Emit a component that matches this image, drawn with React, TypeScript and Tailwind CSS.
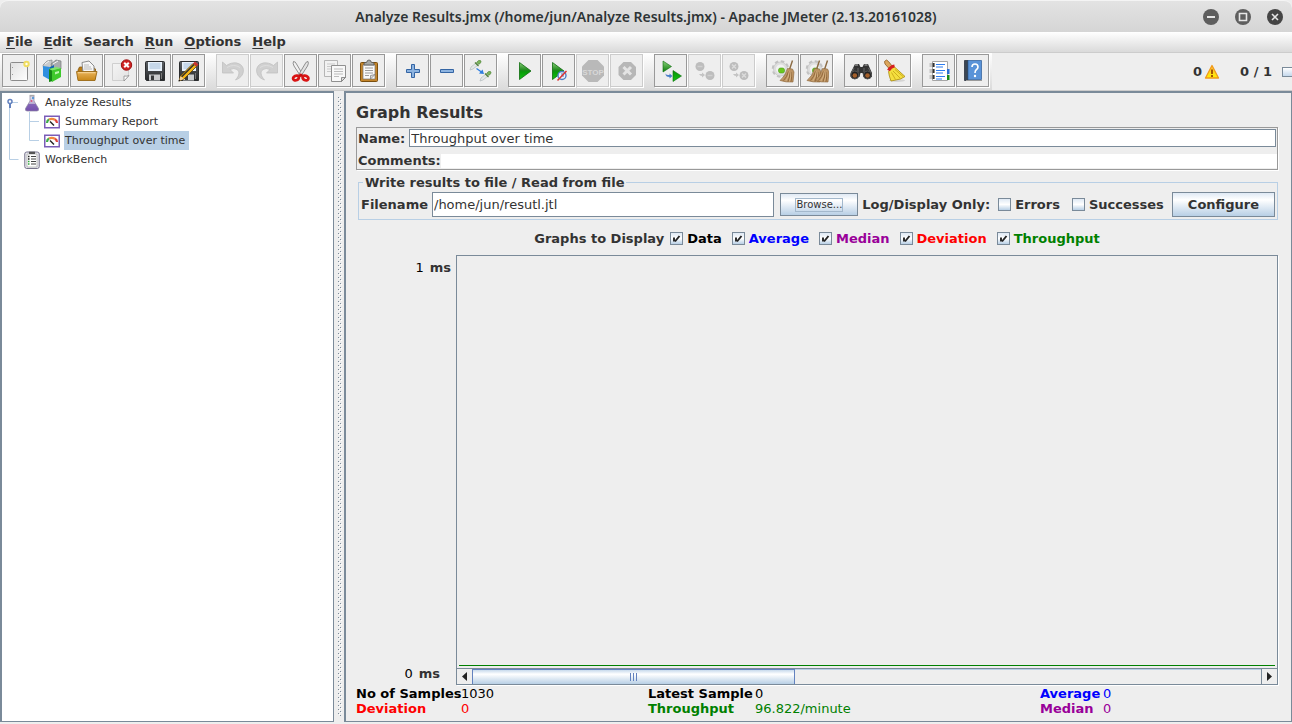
import React, { useState } from "react";

type Draw = { children: React.ReactNode };

function Ico({ children }: Draw) {
  return (
    <svg viewBox="0 0 24 24" className="size-6" fill="none" aria-hidden="true">
      {children}
    </svg>
  );
}

function Defs() {
  return (
    <svg className="absolute size-0" aria-hidden="true">
      <defs>
        <linearGradient id="green" x1="0" y1="0" x2="0" y2="1">
          <stop offset="0" stopColor="#8ad07a" />
          <stop offset="0.45" stopColor="#1f8a1c" />
          <stop offset="0.55" stopColor="#0a9a0a" />
          <stop offset="1" stopColor="#12c512" />
        </linearGradient>
        <linearGradient id="dark" x1="0" y1="0" x2="0" y2="1">
          <stop offset="0" stopColor="#5c6064" />
          <stop offset="1" stopColor="#26282a" />
        </linearGradient>
        <linearGradient id="folder" x1="0" y1="0" x2="0" y2="1">
          <stop offset="0" stopColor="#e9b35a" />
          <stop offset="1" stopColor="#c98818" />
        </linearGradient>
        <linearGradient id="paper" x1="0" y1="0" x2="1" y2="1">
          <stop offset="0" stopColor="#e0e0e0" />
          <stop offset="1" stopColor="#ffffff" />
        </linearGradient>
        <linearGradient id="sheet" x1="0" y1="0" x2="1" y2="1">
          <stop offset="0" stopColor="#f4f4f4" />
          <stop offset="1" stopColor="#e2e2e2" />
        </linearGradient>
        <linearGradient id="warn" x1="0" y1="0" x2="0" y2="1">
          <stop offset="0" stopColor="#ffb640" />
          <stop offset="1" stopColor="#fff200" />
        </linearGradient>
        <linearGradient id="flask" x1="0" y1="0" x2="0" y2="1">
          <stop offset="0" stopColor="#f2f2f4" />
          <stop offset="0.5" stopColor="#b9acd0" />
          <stop offset="0.55" stopColor="#8465b8" />
          <stop offset="1" stopColor="#7450ac" />
        </linearGradient>
      </defs>
    </svg>
  );
}

const NewIcon = () => (
  <Ico>
    <rect x="3.5" y="3.5" width="17" height="18" rx="1" fill="url(#paper)" stroke="#8b8b8b" />
    <path d="M5.5 8v1M5.5 15v1" stroke="#999" />
    <circle cx="19.5" cy="5" r="2.2" fill="#fffdf0" stroke="#f0dd60" strokeWidth="2" />
  </Ico>
);

const TemplatesIcon = () => (
  <Ico>
    <path d="M2 6l4-4 5-1v9l-8 3z" fill="#c7c9cb" stroke="#85888a" strokeWidth="0.7" />
    <path d="M10 5l5-4 5 1v8l-8 2z" fill="#a9acae" stroke="#75787a" strokeWidth="0.7" />
    <path d="M4 5l4-3M12 5l5-3" stroke="#f5f5f5" />
    <path d="M2 7l7 1v13l-7-4z" fill="#2f8fe0" />
    <path d="M9 8l4-2v15l-4 1z" fill="#1565b4" />
    <path d="M8 10l4-1v13l-4 1z" fill="#158815" />
    <path d="M11 11l9-2v9l-9 5z" fill="#3fc92c" />
    <path d="M8 10l7-2 5 1-9 2.500z" fill="#7fe56c" />
    <path d="M14 13l4-1v2l-4 1.500z" fill="#b8f5ac" />
  </Ico>
);

const OpenIcon = () => (
  <Ico>
    <path d="M3 11l1.500-3h3v4H18l1-3 1.500 1v10H4z" fill="#b97a14" stroke="#8a5d12" strokeWidth="0.8" />
    <path d="M7 3.500l7-1.500 5 5v6H8z" fill="#f7f7f7" stroke="#8c8c8c" />
    <path d="M9 6h5M9 8h7M9 10h8" stroke="#aaa" strokeWidth="0.8" />
    <path d="M1.500 12.500h20.500l-2 9h-17z" fill="url(#folder)" stroke="#9b6a16" strokeWidth="0.9" />
    <path d="M3 13.700h17.500" stroke="#f8d79a" />
  </Ico>
);

const CloseIcon = () => (
  <Ico>
    <path d="M3.5 4.500h16v13l-4 4h-12z" fill="url(#sheet)" stroke="#cfcfcf" />
    <path d="M20 16.500l-5 5.500v-5q3 .5 5-.5z" fill="#fff" stroke="#8d8d8d" strokeWidth="0.8" />
    <circle cx="17.5" cy="6" r="5.200" fill="#cf2323" stroke="#9c1212" />
    <path d="M15.200 3.700l4.600 4.600M19.800 3.700l-4.600 4.600" stroke="#fff" strokeWidth="2" />
  </Ico>
);

const Disk = () => (
  <>
    <path d="M2.500 3.500q0-1 1-1h17q1 0 1 1v18h-18l-1-1z" fill="url(#dark)" stroke="#2c2e30" />
    <path d="M5 3h14v9H5z" fill="#e8f1fa" />
    <path d="M6.500 5h11M6.500 7h11M6.500 9h11" stroke="#9db9d6" strokeWidth="0.900" />
    <path d="M6 15.500h11v6H6z" fill="#c9cbcd" />
    <path d="M8 16.500h3v4.500H8z" fill="#37393b" />
    <path d="M18.500 14v6" stroke="#777" />
  </>
);

const SaveIcon = () => <Ico><Disk /></Ico>;
const SaveAsIcon = () => (
  <Ico>
    <Disk />
    <path d="M2 22l1.500-5L16 4.500l3.500 3L7 20z" fill="#f3b414" stroke="#5b3d08" strokeWidth="0.800" />
    <path d="M4.500 18L17 5.500" stroke="#2b2b2b" strokeWidth="1.200" />
    <path d="M16 4.500L18 2.500l3.500 3-2 2z" fill="#c9332c" />
    <path d="M2 22l1.500-5 3.500 3z" fill="#f1cf96" />
    <path d="M1.500 22.500l.6-2 1.400 1.300z" fill="#111" />
  </Ico>
);

const UndoShape = () => (
  <>
    <path d="M1.500 3v11h11L9 10.500q4-2 7 0c3 2 2.500 6-1.500 10.500 6-2 9-7 7.500-12C20 3.500 12 2 5.500 6.500z" fill="#d0d0d0" stroke="#c0c0c0" strokeWidth="0.800" />
    <path d="M6 8.500q7-4 13 0" stroke="#dedede" />
  </>
);
const UndoIcon = () => <Ico><UndoShape /></Ico>;
const RedoIcon = () => <Ico><g transform="translate(24 0) scale(-1 1)"><UndoShape /></g></Ico>;

const CutIcon = () => (
  <Ico>
    <path d="M4.500 2.500q2 0 3 2.500l6.500 11-2.500 1L5 7q-1.500-3-.5-4.500z" fill="#f2f2f2" stroke="#777" strokeWidth="0.800" />
    <path d="M19 2.500q-2 0-3 2.500L9.500 16l2.500 1L18.500 7q1.500-3 .5-4.500z" fill="#e2e2e2" stroke="#777" strokeWidth="0.800" />
    <ellipse cx="7" cy="19" rx="3" ry="2.300" fill="#eee" stroke="#d91414" strokeWidth="2.800" transform="rotate(-25 7 19)" />
    <ellipse cx="16.500" cy="19" rx="3" ry="2.300" fill="#eee" stroke="#d91414" strokeWidth="2.800" transform="rotate(25 16.500 19)" />
    <circle cx="11.800" cy="16.300" r="1.800" fill="#c90d0d" />
  </Ico>
);

const CopyIcon = () => (
  <Ico>
    <path d="M1.500 1.500h13v16h-13z" fill="#f2f2f2" stroke="#b5b5b5" />
    <path d="M4 5h8M4 7.500h8M4 10h8M4 12.500h5" stroke="#c9c9c9" />
    <path d="M8.500 6.500h14v12l-4 4h-10z" fill="#f8f8f8" stroke="#909090" />
    <path d="M11 10h9M11 12.500h9M11 15h9M11 17.500h5" stroke="#bcbcbc" />
    <path d="M22.500 18.500h-4v4z" fill="#dcdcdc" stroke="#777" strokeWidth="0.800" />
  </Ico>
);

const PasteIcon = () => (
  <Ico>
    <rect x="3.5" y="3.500" width="17" height="19" rx="1" fill="#c4852a" stroke="#7a4f10" />
    <path d="M6 6h12v14H6z" fill="#fafafa" stroke="#777" strokeWidth="0.700" />
    <path d="M8 9h8M8 11.500h8M8 14h8M8 16.500h4" stroke="#9c9c9c" />
    <path d="M18 15.500L13.500 20l0-3.500z" fill="#ddd" stroke="#777" strokeWidth="0.700" />
    <path d="M7 6V4l3-1q0-2 2-2t2 2l3 1v2z" fill="#a6a8a5" stroke="#555" strokeWidth="0.800" />
  </Ico>
);

const PlusIcon = () => (
  <Ico>
    <path d="M10.500 5.500h3v5h5v3h-5v5h-3v-5h-5v-3h5z" fill="#8cb3e0" stroke="#3465a4" />
  </Ico>
);
const MinusIcon = () => (
  <Ico>
    <path d="M5.500 10.500h13v3h-13z" fill="#8cb3e0" stroke="#3465a4" />
  </Ico>
);

const Dropper = ({ at }: { at: string }) => (
  <g transform={at}>
    <path d="M0 10l1-3 5-4 2 2-5 4z" fill="#e4e8e9" stroke="#b4bcbe" strokeWidth="0.700" />
    <path d="M5 2.500l3.500 3.500" stroke="#507f3a" strokeWidth="1.200" />
    <path d="M6.500 2.500q2-3 4-2t-1.500 4z" fill="#7ab55c" stroke="#477433" strokeWidth="0.500" />
  </g>
);
const ToggleIcon = () => (
  <Ico>
    <Dropper at="translate(1 1)" />
    <Dropper at="translate(11 12)" />
    <path d="M7.500 9.500l5 3.500" stroke="#2f7ee0" strokeWidth="1.300" />
    <path d="M15 15l-5-.5 3.500-4z" fill="#2f7ee0" />
  </Ico>
);

const StartIcon = () => (
  <Ico>
    <path d="M6.500 3.500v17l11.500-8.500z" fill="url(#green)" stroke="#0c6b0c" strokeWidth="0.800" />
  </Ico>
);
const StartNoPauseIcon = () => (
  <Ico>
    <path d="M5.500 3.500v17l11.500-8.500z" fill="url(#green)" stroke="#0c6b0c" strokeWidth="0.800" />
    <circle cx="15" cy="16.500" r="4" fill="#eef3fb" stroke="#4d7fc4" strokeWidth="1.400" />
    <path d="M15 14v3h2" stroke="#4d7fc4" />
    <path d="M10.500 21.500l9-9.500" stroke="#d33" strokeWidth="1.500" />
  </Ico>
);
const StopIcon = () => (
  <Ico>
    <path d="M7.500 1h9L23 7.500v9L16.500 23h-9L1 16.500v-9z" fill="#b9b9b9" />
    <text x="12" y="15.500" textAnchor="middle" fontSize="8" fontWeight="700" fontFamily="Liberation Sans, sans-serif" fill="#d8d8d8">STOP</text>
  </Ico>
);
const ShutdownIcon = () => (
  <Ico>
    <path d="M8.500 3h7.500l5 5v8l-5 5H8.500l-5-5V8z" fill="#b7b7b7" />
    <path d="M8.500 8l7.500 7.500M16 8l-7.500 7.500" stroke="#e4e4e4" strokeWidth="3" />
  </Ico>
);
const RemoteStartIcon = () => (
  <Ico>
    <path d="M4 2v11l8.500-5.500zM14 11.500v11l8.500-5.500z" fill="url(#green)" stroke="#0c6b0c" strokeWidth="0.600" />
    <path d="M6.500 14.500q1 2 4 1.500v-1.500l3 2.500-3 2.500V18q-4 0-4-3.500z" fill="#4a7fc9" />
  </Ico>
);
const RemoteGrey = ({ mark }: { mark: "bar" | "cross" }) => (
  <Ico>
    <circle cx="7" cy="7.500" r="4.500" fill="#bdbdbd" />
    <circle cx="17" cy="16.500" r="4.500" fill="#bdbdbd" />
    <path d="M6 15h3v-1.500l3 2.500-3 2.500V17q-2 0-3-2z" fill="#c4c4c4" />
    {mark === "bar" ? (
      <path d="M4.500 7.500h5M14.500 16.500h5" stroke="#d0d0d0" strokeWidth="1.500" />
    ) : (
      <path d="M5 5.500l4 4M9 5.500l-4 4M15 14.500l4 4M19 14.500l-4 4" stroke="#dcdcdc" strokeWidth="1.300" />
    )}
  </Ico>
);

const Gear = () => (
  <>
    <circle cx="9.500" cy="10" r="7.500" stroke="#c2c2c2" strokeWidth="2.500" strokeDasharray="3.400 2.500" />
    <circle cx="9.500" cy="10" r="7" fill="#dedede" stroke="#bdbdbd" strokeWidth="0.600" />
    <circle cx="9.500" cy="10" r="4.500" fill="#f2f2f2" />
    <rect x="7.500" y="9" width="6" height="5" rx="2" fill="#6bc820" stroke="#4c9a17" strokeWidth="0.600" />
  </>
);
const Broom = ({ x }: { x: number }) => (
  <g transform={`translate(${x} 0)`}>
    <path d="M11.500 1.500l-3 9" stroke="#8a6a42" strokeWidth="1.400" />
    <path d="M6.500 9.500l5 .5 1.500 3-1 10Q5 23.500-1 21.500 4.500 17 6.500 9.500z" fill="#bd9463" stroke="#8a6338" strokeWidth="0.600" />
    <path d="M7.500 12.500Q6 18 2.500 21.500M9 13q0 5-2 9.500M10.500 13q.5 5-.5 9.500" stroke="#8c6337" strokeWidth="0.900" />
    <path d="M8.300 12.500q-.3 5-3.500 9.500M10 13q0 5-1.500 9.500" stroke="#e4c496" strokeWidth="0.600" />
  </g>
);
const ClearIcon = () => <Ico><Gear /><Broom x={10} /></Ico>;
const ClearAllIcon = () => <Ico><Gear /><Broom x={3} /><Broom x={11} /></Ico>;

const SearchIcon = () => (
  <Ico>
    <path d="M6 5h4l1.500 3h2L15 5h4l4 9v4H14.500l-1-4h-2l-1 4H1.500v-4z" fill="#343434" />
    <path d="M6 6h3M15.500 6h3" stroke="#8f8f8f" strokeWidth="1.500" />
    <path d="M5 9l-2 4M19.500 9l2 4M9 9v4M15 9v4" stroke="#666" />
    <circle cx="5.800" cy="16" r="4" fill="#222" stroke="#555" />
    <circle cx="18.500" cy="16" r="4" fill="#222" stroke="#555" />
    <circle cx="5.800" cy="16.500" r="2.300" fill="#a4602c" />
    <circle cx="18.500" cy="16.500" r="2.300" fill="#a4602c" />
  </Ico>
);
const ResetSearchIcon = () => (
  <Ico>
    <ellipse cx="14" cy="21.500" rx="8" ry="1.500" fill="#d4d4d4" />
    <path d="M1.500 2.500q2-3 4 0l4 5-3 2.500-4.500-5z" fill="#dca65c" stroke="#8b5a20" strokeWidth="0.800" />
    <path d="M11 7.500L22 17.500 17.500 20 8 22q-2-5-2.500-9.500z" fill="#f4df3f" stroke="#a98a0b" strokeWidth="0.800" />
    <path d="M10 12l7.500 7.500M8.500 13.500l4 7M12 10.500l8 7" stroke="#c9a819" strokeWidth="0.900" />
    <path d="M5.500 11.500Q7.500 7.500 11.500 7" stroke="#d62020" strokeWidth="3" />
  </Ico>
);
const FunctionIcon = () => (
  <Ico>
    <path d="M5.500 2.500h15v19h-15z" fill="#fff" stroke="#a5a5a5" />
    <path d="M20 10h2.500v5H20z" fill="#2a6fd6" />
    <path d="M20 16h2.500v5H20z" fill="#178a17" />
    <path d="M9 5.500h9M9 8h7M9 11.500h9M9 14h7M9 17.500h9M9 20h6" stroke="#2d7df0" strokeWidth="1.200" />
    <path d="M6.500 4v4M6.500 10v4M6.500 16v4" stroke="#111" strokeWidth="2" />
    <path d="M2.500 5h4M2.500 7h4M2.500 11h4M2.500 13h4M2.500 17h4M2.500 19h4" stroke="#999" />
  </Ico>
);
const HelpIcon = () => (
  <Ico>
    <path d="M3.500 1.500h3.500v20H3.500z" fill="#3b4654" stroke="#2b3340" strokeWidth="0.800" />
    <path d="M7 1.500h13.500v19H7z" fill="#5a93d8" stroke="#2d5c96" strokeWidth="0.700" />
    <path d="M5 21.500h16" stroke="#9a9a9a" />
    <path d="M11 8q0-3 3-3t3 3q0 1.500-1.500 2.500T14 14" stroke="#fff" strokeWidth="1.600" />
    <circle cx="14" cy="17" r="1.200" fill="#fff" />
  </Ico>
);

type Tool = { label: string; icon: React.ReactNode; off?: boolean };
const toolGroups: Tool[][] = [
  [
    { label: "New", icon: <NewIcon /> },
    { label: "Templates", icon: <TemplatesIcon /> },
    { label: "Open", icon: <OpenIcon /> },
    { label: "Close", icon: <CloseIcon /> },
    { label: "Save", icon: <SaveIcon /> },
    { label: "Save as", icon: <SaveAsIcon /> },
  ],
  [
    { label: "Undo", icon: <UndoIcon />, off: true },
    { label: "Redo", icon: <RedoIcon />, off: true },
    { label: "Cut", icon: <CutIcon /> },
    { label: "Copy", icon: <CopyIcon /> },
    { label: "Paste", icon: <PasteIcon /> },
  ],
  [
    { label: "Expand all", icon: <PlusIcon /> },
    { label: "Collapse all", icon: <MinusIcon /> },
    { label: "Toggle", icon: <ToggleIcon /> },
  ],
  [
    { label: "Start", icon: <StartIcon /> },
    { label: "Start no pauses", icon: <StartNoPauseIcon /> },
    { label: "Stop", icon: <StopIcon />, off: true },
    { label: "Shutdown", icon: <ShutdownIcon />, off: true },
  ],
  [
    { label: "Remote start all", icon: <RemoteStartIcon /> },
    { label: "Remote stop all", icon: <RemoteGrey mark="bar" />, off: true },
    { label: "Remote shutdown all", icon: <RemoteGrey mark="cross" />, off: true },
  ],
  [
    { label: "Clear", icon: <ClearIcon /> },
    { label: "Clear all", icon: <ClearAllIcon /> },
  ],
  [
    { label: "Search", icon: <SearchIcon /> },
    { label: "Reset search", icon: <ResetSearchIcon /> },
  ],
  [
    { label: "Function helper", icon: <FunctionIcon /> },
    { label: "Help", icon: <HelpIcon /> },
  ],
];

const menus = ["File", "Edit", "Search", "Run", "Options", "Help"];

function WindowButton({ label, children, dark }: { label: string; children: React.ReactNode; dark?: boolean }) {
  return (
    <button type="button" aria-label={label} className={dark ? "size-4 rounded-full bg-[#454545]" : "size-4 rounded-full bg-[#5e5e5e]"}>
      <svg viewBox="0 0 16 16" className="size-4" fill="none" stroke="#e6e6e6" strokeWidth="1.600" aria-hidden="true">
        {children}
      </svg>
    </button>
  );
}

function Check({ label, color, initial }: { label: string; color: string; initial: boolean }) {
  const [on, setOn] = useState(initial);
  return (
    <label className="flex items-center gap-1">
      <span className="grid size-[13px] place-items-center">
        <input
          type="checkbox"
          checked={on}
          onChange={() => setOn(!on)}
          className="col-start-1 row-start-1 size-[13px] appearance-none border border-[#7a8a99] bg-linear-to-b from-[#dfe9f4] via-white to-[#b8cfe5]"
        />
        {on && (
          <svg viewBox="0 0 13 13" className="pointer-events-none col-start-1 row-start-1 size-[13px]" fill="none" aria-hidden="true">
            <path d="M4 5.500v4M5 9.500L9.500 4" stroke="#222" strokeWidth="1.900" />
          </svg>
        )}
      </span>
      <span className={color}>{label}</span>
    </label>
  );
}

function GaugeIcon() {
  return (
    <svg viewBox="0 0 16 14" className="h-3.5 w-4" fill="none" aria-hidden="true">
      <rect x="0.750" y="1.250" width="14.500" height="11.500" fill="#fff" stroke="#7a5cb8" strokeWidth="1.500" />
      <path d="M3 8q0-2.500 2-3.500" stroke="#3fae49" strokeWidth="2.200" />
      <path d="M5 4.500q3-1.500 6 .3" stroke="#f0883e" strokeWidth="2.200" />
      <path d="M11 4.800Q13 6 13 8" stroke="#e2443b" strokeWidth="2.200" />
      <path d="M6 6.500l4 4" stroke="#222" strokeWidth="1.400" />
    </svg>
  );
}

function FlaskIcon() {
  return (
    <svg viewBox="0 0 16 18" className="h-[18px] w-4" fill="none" aria-hidden="true">
      <path d="M6 2h4v5l4.500 7.500q.5 2.500-1.500 2.500H3Q1 17 1.500 14.500L6 7z" fill="url(#flask)" stroke="#8a84a0" strokeWidth="0.700" />
      <path d="M5.500 1.500h5" stroke="#aaa" strokeWidth="1.300" />
      <circle cx="9" cy="4" r="1.200" fill="#5d9ad6" />
      <circle cx="7.500" cy="7" r="1" fill="#d8537c" />
    </svg>
  );
}

function BenchIcon() {
  return (
    <svg viewBox="0 0 16 18" className="h-[18px] w-4" fill="none" aria-hidden="true">
      <rect x="0.750" y="1" width="14.500" height="16.500" rx="2" fill="#e8e8ee" stroke="#77738c" />
      <path d="M3 3h10v13H3z" fill="#fff" stroke="#999" strokeWidth="0.600" />
      <path d="M5 .7h6V3H5z" fill="#555" />
      <path d="M7 5.500h5M7 8h5M7 10.500h5M7 13h5" stroke="#444" strokeWidth="1.200" />
      <path d="M4 5.500h1.500M4 8h1.500" stroke="#222" strokeWidth="1.500" />
      <path d="M4 10.500h1.500M4 13h1.500" stroke="#2fa63a" strokeWidth="1.500" />
    </svg>
  );
}

function Tree() {
  return (
    <nav aria-label="Test plan" className="w-[334px] shrink-0 border border-l-2 border-t-2 border-[#7a8a99] bg-white text-[11px] leading-[19px]">
      <ul>
        <li>
          <div className="flex h-[19px] items-center">
            <svg viewBox="0 0 22 19" className="h-[19px] w-[22px]" fill="none" aria-hidden="true">
              <path d="M10 9.500h6" stroke="#b8cfe5" />
              <path d="M7.500 13v6" stroke="#b8cfe5" />
              <circle cx="8" cy="8.500" r="2" fill="#fff" stroke="#6382bf" strokeWidth="1.500" />
              <path d="M8 10.500v4.500" stroke="#6382bf" strokeWidth="2" />
            </svg>
            <FlaskIcon />
            <button type="button" className="ml-1 px-px">Analyze Results</button>
          </div>
          <ul>
            {["Summary Report", "Throughput over time"].map((name, i) => (
              <li key={name} className="flex h-[19px] items-center">
                <svg viewBox="0 0 42 19" className="h-[19px] w-[42px]" fill="none" aria-hidden="true">
                  <path d={i === 0 ? "M7.500 0v19M27.500 0v19M28 9.500h9" : "M7.500 0v19M27.500 0v9.500h9.500"} stroke="#b8cfe5" />
                </svg>
                <GaugeIcon />
                <button type="button" className={i === 1 ? "ml-1 h-[19px] bg-[#b8cfe5] pl-px pr-1" : "ml-1 px-px"}>{name}</button>
              </li>
            ))}
          </ul>
        </li>
        <li className="flex h-[19px] items-center">
          <svg viewBox="0 0 22 19" className="h-[19px] w-[22px]" fill="none" aria-hidden="true">
            <path d="M7.500 0v9.500h9" stroke="#b8cfe5" />
          </svg>
          <BenchIcon />
          <button type="button" className="ml-1 px-px">WorkBench</button>
        </li>
      </ul>
    </nav>
  );
}

function Stat({ name, value, color, nameWidth }: { name: string; value: string; color: string; nameWidth: string }) {
  return (
    <div className={`flex whitespace-nowrap ${color}`}>
      <dt className={`${nameWidth} font-bold`}>{name}</dt>
      <dd className="font-normal">{value}</dd>
    </div>
  );
}

const metal = "border border-[#7a8a99] bg-linear-to-b from-[#dfe9f4] via-white via-30% to-[#b8cfe5]";

export default function App() {
  const [name, setName] = useState("Throughput over time");
  const [comments, setComments] = useState("");
  const [file, setFile] = useState("/home/jun/resutl.jtl");

  return (
    <div className="flex h-screen min-h-[480px] flex-col overflow-hidden bg-[#eeeeee] font-['DejaVu_Sans',sans-serif] text-[13px] leading-[15px] text-[#333333]">
      <Defs />
      <header className="flex h-8 shrink-0 items-center rounded-t-lg border-t border-[#f4f4f4] bg-linear-to-b from-[#e3e3e3] to-[#d5d5d5] px-[9px]">
        <div className="flex-1" />
        <h1 className="font-['Noto_Sans',sans-serif] text-[14px] font-semibold text-[#2e3436]">
          Analyze Results.jmx (/home/jun/Analyze Results.jmx) - Apache JMeter (2.13.20161028)
        </h1>
        <div className="flex flex-1 justify-end gap-4">
          <WindowButton label="Minimize"><path d="M4 8h8" strokeWidth="2" /></WindowButton>
          <WindowButton label="Maximize"><path d="M4.500 4.500h7v7h-7z" /></WindowButton>
          <WindowButton label="Close" dark><path d="M5 5l6 6M11 5l-6 6" /></WindowButton>
        </div>
      </header>

      <nav aria-label="Main menu" className="flex h-[21px] shrink-0 items-center gap-[11px] border-b border-[#cccccc] bg-linear-to-b from-white to-[#dadada] px-1.5 pb-0.5 font-bold">
        {menus.map((m) => (
          <button key={m} type="button">
            {m === "Search" ? m : <><span className="underline underline-offset-2">{m[0]}</span>{m.slice(1)}</>}
          </button>
        ))}
      </nav>

      <div className="flex h-[38px] shrink-0 items-stretch border-b border-[#cccccc] font-bold">
        <div className="flex items-start gap-[11px] bg-linear-to-b from-white to-[#dadada] pt-px pr-[3px] pl-0.5">
          {toolGroups.map((group) => (
            <div key={group[0].label} className="flex gap-px">
              {group.map((t) => (
                <button
                  key={t.label}
                  type="button"
                  aria-label={t.label}
                  disabled={t.off}
                  className={
                    t.off
                      ? "grid size-[33px] place-items-center border border-[#cccccc] bg-[#eeeeee] shadow-[1px_1px_0_white]"
                      : "grid size-[33px] place-items-center border border-[#999999] bg-[#eeeeee] shadow-[1px_1px_0_white]"
                  }
                >
                  {t.icon}
                </button>
              ))}
            </div>
          ))}
        </div>
        <div className="flex flex-1 items-center justify-end">
          <span>0</span>
          <svg viewBox="0 0 16 16" className="ml-0.5 size-4" fill="none" aria-hidden="true">
            <path d="M8 1.500l6.500 12.500h-13z" fill="url(#warn)" stroke="#f09a1a" strokeWidth="1.300" strokeLinejoin="round" />
            <path d="M8 5.500v4.500M8 11v2" stroke="#9c4a00" strokeWidth="1.800" />
          </svg>
          <span className="ml-5">0 / 1</span>
          <span className="ml-2.5 h-2.5 w-2.5 border border-r-0 border-[#7a8a99] bg-linear-to-b from-white to-[#c5d8ec]" />
        </div>
      </div>

      <div className="flex min-h-0 flex-1 pb-0.5">
        <Tree />
        <div role="separator" aria-orientation="vertical" className="w-2.5 shrink-0 px-1 py-1.5">
          <svg className="h-full w-1" aria-hidden="true">
            <defs>
              <pattern id="bumps" width="4" height="4" patternUnits="userSpaceOnUse">
                <path d="M0 0h1v1H0zM2 2h1v1H2z" fill="#7a8a99" />
                <path d="M1 1h1v1H1zM3 3h1v1H3z" fill="#ffffff" />
              </pattern>
            </defs>
            <rect width="100%" height="100%" fill="url(#bumps)" />
          </svg>
        </div>
        <main className="flex min-w-0 flex-1 flex-col border border-l-2 border-t-2 border-[#7a8a99] pr-[13px] pl-2.5">
          <h2 className="mt-2.5 text-[16px] leading-5 font-bold">Graph Results</h2>

          <div className="mt-1 border border-[#999999] p-px pr-0 font-bold shadow-[1px_1px_0_white]">
            <div className="flex items-center gap-1 pr-px">
              <label htmlFor="name">Name:</label>
              <input id="name" value={name} onChange={(e) => setName(e.target.value)} className="h-[18px] min-w-0 flex-1 border border-[#7a8a99] bg-white px-px font-normal outline-none" />
            </div>
            <div className="mt-1.5 flex items-center">
              <label htmlFor="comments">Comments:</label>
              <input id="comments" value={comments} onChange={(e) => setComments(e.target.value)} className="h-[14px] min-w-0 flex-1 bg-white px-px font-normal outline-none" />
            </div>
          </div>

          <fieldset className="mt-[5px] ml-0.5 min-w-0 border border-[#b8cfe5] px-0.5 pb-0.5 font-bold">
            <legend className="ml-0.5 px-0.5">Write results to file / Read from file</legend>
            <div className="flex items-center pt-0.5">
              <label htmlFor="file" className="mr-1">Filename</label>
              <input id="file" value={file} onChange={(e) => setFile(e.target.value)} className="h-[25px] min-w-0 flex-1 border border-[#7a8a99] bg-white px-px font-normal outline-none" />
              <button type="button" className={`${metal} ml-1.5 h-[23px] px-3.5 text-[10px] font-normal`}>
                <span className="block border border-[#a3b8cc] leading-3">Browse...</span>
              </button>
              <span className="ml-1">Log/Display Only:</span>
              <div className="ml-2 flex gap-3">
                <Check label="Errors" color="text-[#333333]" initial={false} />
                <Check label="Successes" color="text-[#333333]" initial={false} />
              </div>
              <button type="button" className={`${metal} ml-2 h-[25px] px-[15px]`}>Configure</button>
            </div>
          </fieldset>

          <div className="mt-[11px] flex justify-center gap-2.5 font-bold">
            <span className="-mr-1">Graphs to Display</span>
            <Check label="Data" color="text-black" initial />
            <Check label="Average" color="text-[#0000ff]" initial />
            <Check label="Median" color="text-[#990099]" initial />
            <Check label="Deviation" color="text-[#ff0000]" initial />
            <Check label="Throughput" color="text-[#008000]" initial />
          </div>

          <div className="mt-[9px] flex min-h-0 flex-1">
            <div className="flex w-[100px] flex-col justify-between pt-[5px] pb-1">
              <div className="flex justify-end gap-1.5 pr-[5px] font-bold">
                <span className="font-normal text-black">1</span>
                <span>ms</span>
              </div>
              <div className="flex justify-end gap-1.5 pr-4 font-bold">
                <span className="font-normal text-black">0</span>
                <span>ms</span>
              </div>
            </div>
            <div className="flex min-w-0 flex-1 flex-col border border-[#7a8a99] shadow-[1px_1px_0_white]">
              <div role="img" aria-label="Throughput graph" className="mx-0.5 mb-0.5 min-h-0 flex-1 border-b border-[#008000]" />
              <div className="flex h-4 border-t border-[#7a8a99]">
                <button type="button" aria-label="Scroll left" className="grid w-[15px] place-items-center">
                  <svg viewBox="0 0 5 9" className="h-[9px] w-[5px]" aria-hidden="true"><path d="M5 0v9L0 4.500z" fill="#222" /></svg>
                </button>
                <div className="flex min-w-0 flex-1 border-t border-[#b8cfe5]">
                  <div className="-mt-px flex w-[41%] items-center justify-center gap-0.5 border border-b-0 border-[#6382bf] bg-linear-to-b from-[#c8daec] via-white via-30% to-[#b8cfe5]">
                    <span className="h-2 w-px bg-[#6382bf]" />
                    <span className="h-2 w-px bg-[#6382bf]" />
                    <span className="h-2 w-px bg-[#6382bf]" />
                  </div>
                </div>
                <button type="button" aria-label="Scroll right" className="grid w-4 place-items-center border-l border-[#7a8a99]">
                  <svg viewBox="0 0 5 9" className="h-[9px] w-[5px]" aria-hidden="true"><path d="M0 0v9l5-4.500z" fill="#222" /></svg>
                </button>
              </div>
            </div>
          </div>

          <dl className="mt-px mb-[5px] grid grid-cols-[292fr_392fr_238fr]">
            <Stat name="No of Samples" value="1030" color="text-black" nameWidth="w-[105px]" />
            <Stat name="Latest Sample" value="0" color="text-black" nameWidth="w-[107px]" />
            <Stat name="Average" value="0" color="text-[#0000ff]" nameWidth="w-[63px]" />
            <Stat name="Deviation" value="0" color="text-[#ff0000]" nameWidth="w-[105px]" />
            <Stat name="Throughput" value="96.822/minute" color="text-[#008000]" nameWidth="w-[107px]" />
            <Stat name="Median" value="0" color="text-[#990099]" nameWidth="w-[63px]" />
          </dl>
        </main>
      </div>
    </div>
  );
}
